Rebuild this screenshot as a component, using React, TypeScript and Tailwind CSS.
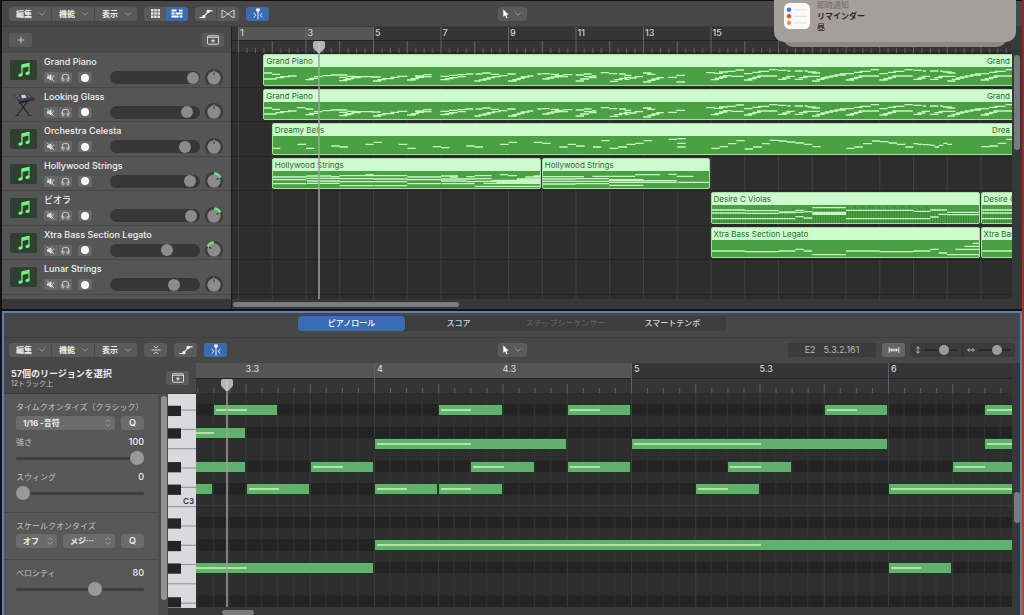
/**
 * Arrange window with the tracks area on top and the piano roll editor below.
 */

import { useState } from "react";
import type { ReactNode } from "react";
import { ChevronDown, ChevronsUpDown, Headphones, Plus } from "lucide-react";

// [start, y, end] in thirds of a pixel, measured from the region's corner
type Seg = [number, number, number];

// ---- timeline scales ----
const BAR = 135 / 4; // tracks area, px per bar
const BAR_ONE = 6; // x of bar 1 in the tracks area
const barX = (bar: number) => BAR_ONE + (bar - 1) * BAR;

const STEP = 257 / 16; // piano roll, px per 1/16
const BAR_FOUR = 178; // x of bar 4 in the piano roll
const stepX = (step: number) => BAR_FOUR + step * STEP;

const ROWS = 19;
const ROW_H = 214 / ROWS;

const shift = (segs: Seg[], dx: number): Seg[] => segs.map(([a, y, b]) => [a + dx, y, b + dx]);

// ---- region contents ----
const PIANO_INTRO: Seg[] = [
  [0, 18, 24], [24, 22, 48], [0, 36, 38], [35, 32, 60], [48, 29, 75], [72, 27, 98],
  [124, 38, 150], [135, 34, 162], [150, 29, 175], [175, 26, 200], [200, 24, 250],
  [225, 31, 250], [225, 41, 250], [238, 38, 262], [245, 35, 270], [250, 28, 275], [262, 32, 290], [275, 29, 328], [322, 30, 350],
  [327, 42, 352], [340, 38, 365], [355, 35, 390], [380, 31, 405], [400, 28, 430],
  [429, 39, 455], [440, 35, 465], [455, 31, 480], [453, 27, 480], [475, 29, 503], [478, 23, 503],
  [529, 38, 555], [529, 28, 555], [542, 35, 568], [555, 25, 580], [555, 32, 580], [580, 23, 605], [580, 29, 605], [605, 21, 628],
  [631, 42, 650], [645, 39, 668], [656, 36, 680], [635, 21, 655], [655, 18, 680], [668, 32, 693], [685, 29, 710], [680, 22, 705], [705, 26, 730], [730, 21, 755],
  [732, 42, 758], [745, 38, 770], [758, 34, 782], [770, 30, 796], [790, 27, 808],
  [820, 21, 833], [835, 20, 857], [835, 36, 857], [847, 33, 870], [860, 22, 885], [860, 30, 885], [872, 26, 898], [885, 29, 912], [898, 23, 925],
  [935, 42, 960], [948, 36, 975], [960, 29, 985], [935, 24, 960], [960, 21, 983], [975, 32, 998], [983, 27, 997],
  [1010, 17, 1035], [1035, 20, 1060], [1065, 21, 1085], [1037, 43, 1062], [1050, 38, 1075], [1065, 34, 1090], [1080, 31, 1102],
  [1082, 25, 1102], [1082, 37, 1097], [1097, 33, 1117], [1112, 29, 1137], [1137, 18, 1162], [1150, 22, 1174],
  [1137, 45, 1162], [1150, 40, 1174], [1162, 36, 1187], [1177, 32, 1200], [1212, 31, 1239], [1237, 25, 1263], [1237, 45, 1263],
];
const RISE: Seg[] = [
  [1440, 39, 1465], [1452, 35, 1477], [1465, 31, 1490], [1479, 27, 1504], [1504, 27, 1540],
  [1440, 20, 1465], [1465, 16, 1490], [1482, 13, 1515], [1515, 8, 1540],
];
const CREST: Seg[] = [
  [1542, 10, 1567], [1570, 12, 1580], [1592, 12, 1617], [1622, 12, 1631], [1631, 15, 1657], [1644, 18, 1668],
  [1542, 37, 1567], [1555, 33, 1579], [1567, 28, 1592], [1592, 37, 1617], [1605, 32, 1630], [1617, 28, 1643], [1640, 28, 1668],
  [1644, 42, 1668], [1657, 37, 1682], [1670, 33, 1694], [1682, 30, 1707], [1697, 27, 1722], [1712, 24, 1745], [1727, 21, 1745],
];
const PIANO: Seg[] = [
  ...PIANO_INTRO,
  [1326, 17, 1352], [1350, 19, 1377], [1365, 15, 1392], [1390, 13, 1415], [1415, 9, 1440],
  [1340, 38, 1365], [1352, 34, 1377], [1365, 30, 1390], [1377, 26, 1402], [1402, 28, 1439],
  ...RISE,
  ...CREST,
  ...shift(RISE, 305),
  ...shift(RISE, 406),
  ...shift(CREST, 406),
  ...shift(RISE, 710),
];
const GLASS: Seg[] = [[98, 17, 124], [124, 21, 148], ...PIANO.filter(([a, y]) => a !== 1237 || y !== 45)];

const BELLS: Seg[] = [
  [0, 37, 22], [73, 25, 99], [99, 37, 124], [175, 30, 200], [200, 33, 225], [277, 25, 302], [302, 19, 327], [377, 25, 403],
  [403, 37, 428], [479, 32, 504], [504, 35, 529], [580, 30, 605], [605, 33, 630], [681, 25, 707], [707, 19, 732], [782, 19, 807],
  [807, 22, 833], [859, 33, 884], [884, 25, 909], [909, 30, 935], [960, 33, 985], [985, 14, 1010], [1010, 37, 1035], [1035, 33, 1062],
  [1060, 25, 1087], [1087, 22, 1112], [1112, 14, 1137], [1187, 10, 1212], [1213, 8, 1238], [1213, 22, 1238], [1213, 33, 1238],
  [1315, 37, 1340], [1340, 32, 1365], [1365, 23, 1390], [1390, 14, 1415], [1415, 39, 1440], [1440, 33, 1467], [1467, 23, 1490],
  [1490, 13, 1517], [1517, 15, 1542], [1542, 18, 1567], [1567, 21, 1593], [1593, 25, 1618], [1618, 32, 1643], [1720, 37, 1744],
  [1744, 33, 1770], [1770, 23, 1797], [1797, 15, 1821], [1821, 17, 1847], [1847, 21, 1872], [1872, 25, 1897], [1897, 33, 1921],
  [1921, 23, 1935], [1935, 25, 1947], [1949, 26, 1972], [1972, 28, 1985], [1985, 33, 1998], [1998, 28, 2011], [2011, 22, 2023],
  [2023, 25, 2037], [2125, 32, 2150], [2150, 30, 2175], [2175, 22, 2200], [2200, 10, 2224],
];

const STRINGS_A: Seg[] = [
  [0, 18, 100], [0, 26, 100], [0, 38, 100], [100, 15, 175], [100, 22, 200], [102, 30, 200], [102, 37, 200],
  [175, 17, 200], [200, 14, 302], [277, 11, 302], [200, 23, 302], [200, 32, 302], [200, 44, 302], [302, 14, 403], [302, 24, 403],
  [302, 32, 403], [304, 44, 403], [403, 18, 504], [403, 26, 504], [403, 38, 504], [504, 15, 555], [530, 18, 555], [504, 24, 605],
  [504, 30, 580], [507, 38, 605], [580, 17, 605], [580, 32, 605], [605, 14, 656], [605, 23, 656], [605, 31, 806], [605, 46, 806],
  [631, 37, 806], [671, 34, 806], [681, 11, 706], [706, 14, 732], [656, 28, 806], [757, 18, 806], [782, 15, 806], [732, 24, 806],
];
const STRINGS_B: Seg[] = [
  [0, 17, 98], [0, 24, 98], [0, 31, 198], [0, 39, 98], [98, 17, 123], [148, 16, 276], [98, 23, 198], [98, 38, 198],
  [198, 26, 301], [198, 34, 401], [198, 43, 301], [276, 11, 351], [376, 10, 401], [401, 16, 451], [198, 29, 401], [404, 34, 501],
];
const VIOLAS: Seg[] = [
  [0, 15, 98], [0, 24, 98], [0, 41, 250], [98, 17, 200], [98, 25, 200], [200, 21, 250], [200, 23, 250], [250, 16, 275],
  [250, 22, 275], [250, 35, 275], [275, 20, 301], [275, 39, 301], [301, 8, 402], [301, 22, 402], [301, 25, 402], [301, 28, 402],
  [402, 16, 604], [402, 41, 655], [604, 19, 655], [655, 15, 705], [655, 36, 680], [680, 28, 705], [705, 22, 807], [705, 29, 807],
];
const BASS: Seg[] = [
  [0, 33, 98], [98, 35, 200], [200, 33, 250], [250, 28, 275], [275, 33, 300], [301, 44, 402], [402, 33, 503], [503, 35, 605],
  [605, 33, 655], [655, 28, 680], [680, 39, 705], [705, 44, 807], [730, 28, 807], [757, 19, 807], [782, 10, 807],
];

interface RegionData {
  name: string;
  from: number;
  to: number;
  segs: Seg[];
  tail?: string; // name of the next region's edge, right aligned
  hatched?: boolean;
}
interface Track {
  name: string;
  volume: number;
  pan: number;
  keys?: boolean;
  regions: RegionData[];
}

const TRACKS: Track[] = [
  { name: "Grand Piano", volume: 99, pan: 0, regions: [{ name: "Grand Piano", from: 1.75, to: 40, segs: PIANO, tail: "Grand" }] },
  { name: "Looking Glass", volume: 91, pan: 0, keys: true, regions: [{ name: "Grand Piano", from: 1.75, to: 40, segs: GLASS, tail: "Grand" }] },
  { name: "Orchestra Celesta", volume: 88, pan: 0, regions: [{ name: "Dreamy Bells", from: 2, to: 40, segs: BELLS, tail: "Drea" }] },
  {
    name: "Hollywood Strings", volume: 95, pan: 60,
    regions: [
      { name: "Hollywood Strings", from: 2, to: 10, segs: STRINGS_A },
      { name: "Hollywood Strings", from: 10, to: 15, segs: STRINGS_B },
    ],
  },
  {
    name: "ビオラ", volume: 96, pan: 60,
    regions: [
      { name: "Desire C Violas", from: 15, to: 23, segs: VIOLAS, hatched: true },
      { name: "Desire C Violas", from: 23, to: 31, segs: VIOLAS, hatched: true },
    ],
  },
  {
    name: "Xtra Bass Section Legato", volume: 66, pan: -60,
    regions: [
      { name: "Xtra Bass Section Legato", from: 15, to: 23, segs: BASS },
      { name: "Xtra Bass Section Legato", from: 23, to: 31, segs: BASS },
    ],
  },
  { name: "Lunar Strings", volume: 74, pan: 0, regions: [] },
];

// Piano roll notes: [row, first 1/16, last 1/16], counted from bar 4
const NOTES: [number, number, number][] = [
  [1, -10, -6], [1, 4, 8], [1, 12, 16], [1, 28, 32], [1, 38, 42],
  [3, -12, -8],
  [4, 0, 12], [4, 16, 32], [4, 38, 50],
  [6, -16, -8], [6, -4, 0], [6, 6, 10], [6, 12, 16], [6, 22, 26], [6, 36, 40],
  [8, -14, -10], [8, -8, -4], [8, 0, 4], [8, 4, 8], [8, 20, 24], [8, 32, 48],
  [13, 0, 48],
  [15, -16, 0], [15, 32, 36],
];
const BLACK_ROWS = [1, 3, 6, 8, 11, 13, 15, 18];

// ---- icons ----
function GridIcon() {
  return (
    <svg viewBox="0 0 9 9" className="size-[9px]" fill="#e4e4e4">
      {[0, 3.25, 6.5].map((y) => [0, 3.25, 6.5].map((x) => <rect key={`${x}-${y}`} x={x} y={y} width="2.5" height="2.5" />))}
    </svg>
  );
}

function RegionsIcon() {
  return (
    <svg viewBox="0 0 12 9" className="h-[9px] w-3" fill="#fff">
      <path d="M.5.500h5v2h-5zM8 .5h3.500v2H8zM.5 3.500h3v2h-3zM4.500 3.500h7v2h-7zM.5 6.500h7v2h-7zM8.500 6.500h3v2h-3z" />
    </svg>
  );
}

function AutomationIcon() {
  return (
    <svg viewBox="0 0 14 10" className="h-2.5 w-3.5" fill="none" stroke="#f2f2f2" strokeWidth="1.200">
      <path d="M.5 8.500h3.500L10 1.800h3.500" />
      <circle cx="4.800" cy="7.800" r="1.700" fill="#f2f2f2" stroke="none" />
      <circle cx="9.200" cy="2.400" r="1.700" fill="#f2f2f2" stroke="none" />
    </svg>
  );
}

function FlexIcon() {
  return (
    <svg viewBox="0 0 14 10" className="h-2.5 w-3.5" fill="none" stroke="#dcdcdc" strokeWidth="1">
      <path d="M1 1.200C3.500 2 5 4 7 5S10.500 8 13 8.800V1.200C10.500 2 9 4 7 5S3.500 8 1 8.800z" />
    </svg>
  );
}

function SnapIcon() {
  return (
    <svg viewBox="0 0 12 12" className="size-3" fill="none" stroke="#dfe9f7" strokeWidth="1">
      <path d="M6 4v7.500M1.800 4.800 3.700 7.200 1.800 9.600M10.200 4.800 8.300 7.200l1.900 2.400" />
      <path d="M4.200.500h3.600v2.300L6 4.600 4.200 2.800z" fill="#fff" stroke="none" />
    </svg>
  );
}

function CatchIcon() {
  return (
    <svg viewBox="0 0 12 10" className="h-2.5 w-3" fill="none" stroke="#d8d8d8" strokeWidth="1">
      <rect x=".5" y=".8" width="11" height="8.400" rx=".6" />
      <path d="M.5 2.300h11" />
      <path d="M6 3.600v3M4.400 5.400 6 7.300l1.600-1.900z" fill="#d8d8d8" strokeWidth=".8" />
    </svg>
  );
}

function CollapseIcon() {
  return (
    <svg viewBox="0 0 10 10" className="size-2.5" fill="none" stroke="#cfcfcf" strokeWidth="1">
      <path d="M.5 5h9M2.800 1 5 3.200 7.200 1M2.800 9 5 6.800 7.200 9" />
    </svg>
  );
}

function PointerIcon() {
  return (
    <svg viewBox="0 0 8 11" className="h-[10px] w-2" fill="#fff">
      <path d="M1 .3v8.200l1.900-1.700 1.500 3.500 1.400-.6-1.500-3.400h2.500z" />
    </svg>
  );
}

function MuteIcon() {
  return (
    <svg viewBox="0 0 9 9" className="size-[9px]">
      <path d="M1 3.200h1.700L5.500 1v7L2.700 5.800H1z" fill="#dedede" />
      <path d="M1.200.800 8 8.200" stroke="#dedede" strokeWidth=".9" />
      <path d="M6.600 3.500v2M7.800 2.500v1.500" stroke="#dedede" strokeWidth=".7" />
    </svg>
  );
}

function NotesIcon() {
  return (
    <svg viewBox="0 0 14 16" className="h-4 w-3.5" fill="#77f07c">
      <path d="M4.300 2.600 12.600.6v10.600h-1.200V4.600L5.600 6v6.900H4.300z" />
      <ellipse cx="3.500" cy="13" rx="2.200" ry="1.700" transform="rotate(-18 3.500 13)" />
      <ellipse cx="10.500" cy="11.300" rx="2.200" ry="1.700" transform="rotate(-18 10.500 11.300)" />
    </svg>
  );
}

function StageKeyboardIcon() {
  return (
    <svg viewBox="0 0 27 26" className="h-[26px] w-[27px]">
      <path d="M7.500 23 17 10M18.500 22 9.500 10M5.500 24l3.500-1M17 23l4.500.5" stroke="#242426" strokeWidth="1.200" />
      <path d="m3 3.500 14-2.500 7.500 5L9 10z" fill="#413f50" />
      <path d="m9 10 15.500-4v2L9 12z" fill="#241c26" />
      <path d="m19 7.600 5.500-1.600v2L19 9.500z" fill="#6b1f25" />
      <path d="m11 3.200 4-.6 1.500 3-4.500.9z" fill="#c8d4e6" />
      <path d="m5 4.300 4-.5M7.500 6.500l3-.5M17 3l3 1.800" stroke="#8587a8" strokeWidth=".8" />
    </svg>
  );
}

// ---- shared controls ----
function ToolButton({ label, active, children }: { label: string; active?: boolean; children: ReactNode }) {
  return (
    <button
      aria-label={label}
      className={`flex h-[14px] w-[23px] items-center justify-center rounded-[3px] ${active ? "bg-[#3a6cb4]" : "bg-[#5a5a5a]"}`}
    >
      {children}
    </button>
  );
}

function MenuGroup() {
  return (
    <div className="flex h-[14px] w-32 divide-x divide-[#4a4a4a] overflow-hidden rounded-[3px] bg-[#5a5a5a]">
      {["編集", "機能", "表示"].map((m) => (
        <button key={m} className="flex flex-1 items-center justify-between pr-1 pl-[7px] text-[8px] font-bold text-[#ededed]">
          {m}
          <ChevronDown className="size-2.5 text-[#a8a8a8]" />
        </button>
      ))}
    </div>
  );
}

function PointerMenu() {
  return (
    <button aria-label="ツール" className="flex h-[14px] w-[29px] items-center justify-center gap-[3px] rounded-[3px] bg-[#5a5a5a]">
      <PointerIcon />
      <ChevronDown className="size-2.5 text-[#a8a8a8]" />
    </button>
  );
}

function PanKnob({ pan }: { pan: number }) {
  const arc = pan > 0 ? "M9 1.500A7.500 7.500 0 0 1 15.500 5.500" : pan < 0 ? "M9 1.500A7.500 7.500 0 0 0 2.500 5.500" : "M9 .8v2";
  return (
    <svg viewBox="0 0 18 18" className="size-[18px] shrink-0" role="img" aria-label={`パン ${pan}`}>
      <path d="M4 15.200A8 8 0 1 1 14 15.200" fill="none" stroke="#3a3a3a" strokeWidth="2" />
      <circle cx="9" cy="9" r="6.500" fill="#8b8b8b" />
      <path d={arc} fill="none" stroke={pan === 0 ? "#5a9c5c" : "#75e37d"} strokeWidth={pan === 0 ? 1 : 2.500} />
      <path d="M9 3.500v2.500" stroke="#333" strokeWidth="1" transform={`rotate(${pan} 9 9)`} />
    </svg>
  );
}

function TrackHeader({ track }: { track: Track }) {
  const [volume, setVolume] = useState(track.volume);
  return (
    <div className="flex border-b border-[#484848] pl-2">
      <div className={`mt-[7px] flex h-5 w-[27px] shrink-0 items-center justify-center rounded-[2px] ${track.keys ? "" : "bg-[#2d4032]"}`}>
        {track.keys ? <StageKeyboardIcon /> : <NotesIcon />}
      </div>
      <div className="ml-[7px] min-w-0 flex-1 pt-[3px]">
        <div className="truncate text-[9px] leading-3 font-medium text-[#f0f0f0]">{track.name}</div>
        <div className="mt-[3px] flex h-[13px] items-center">
          <div className="flex h-[11px] w-7 divide-x divide-[#555] overflow-hidden rounded-[2px] bg-[#686868]">
            <button aria-label="ミュート" className="flex flex-1 items-center justify-center"><MuteIcon /></button>
            <button aria-label="ソロ" className="flex flex-1 items-center justify-center">
              <Headphones className="size-[9px] text-[#e8e8e8]" />
            </button>
          </div>
          <button aria-label="録音可能" className="ml-1.5 flex h-[11px] w-[14px] items-center justify-center rounded-[2px] bg-[#686868]">
            <span className="size-2 rounded-full bg-white" />
          </button>
          <input
            type="range"
            aria-label={`${track.name} 音量`}
            value={volume}
            onChange={(e) => setVolume(Number(e.target.value))}
            className="ml-[18px] h-[13px] w-[90px] appearance-none rounded-full bg-[#373737] [&::-webkit-slider-thumb]:size-3 [&::-webkit-slider-thumb]:appearance-none [&::-webkit-slider-thumb]:rounded-full [&::-webkit-slider-thumb]:bg-[#8b8b8b]"
          />
          <div className="ml-[5px] flex"><PanKnob pan={track.pan} /></div>
        </div>
      </div>
    </div>
  );
}

function Region({ region }: { region: RegionData }) {
  const width = (region.to - region.from) * BAR;
  return (
    <div
      className="absolute inset-y-px overflow-hidden rounded-[2px] border border-[#a3e0a1] bg-[#4ca044]"
      style={{ left: barX(region.from), width: width - 1 }}
    >
      <div className="h-3 truncate bg-[#ccfccd] pl-0.5 text-[8px] leading-3 text-[#2e6a31]">{region.name}</div>
      <svg className="block h-5" width={width} viewBox={`0 0 ${width * 3} 60`} preserveAspectRatio="none">
        {region.hatched && (
          <path
            d={Array.from({ length: 110 }, (_, i) => `M${i * 7.4} ${i > 32 && i < 90 ? 2 + ((i * 5) % 16) : 18}V57`).join("")}
            stroke="#3a8536"
            strokeWidth="3"
          />
        )}
        <path d={region.segs.map(([a, y, b]) => `M${a} ${y}H${b}`).join("")} stroke="#c6f7c4" strokeWidth="4" />
      </svg>
    </div>
  );
}

function Playhead({ x }: { x: number }) {
  return (
    <svg className="pointer-events-none absolute top-0 z-10 h-full w-3" style={{ left: x - 6 }} aria-hidden="true">
      <path d="M6 6V600" stroke="#a0a0a0" strokeWidth="1.500" />
      <path d="M2 0h8q2 0 2 2v4q0 1-1 2l-4 4H5L1 8Q0 7 0 6V2Q0 0 2 0z" fill="#b4b4b4" />
      <path d="M6 1.500V12" stroke="#cfcfcf" strokeWidth="1" />
    </svg>
  );
}

function TracksArea() {
  return (
    <div className="relative min-w-0 flex-1 overflow-hidden bg-[#2d2d2d]">
      {/* ruler */}
      <div className="relative h-[26px] bg-[#353535]">
        <div className="absolute top-0 h-[13px] bg-[#565656]" style={{ left: barX(1), width: 4 * BAR }} />
        <svg className="absolute inset-0 size-full">
          <defs>
            <pattern id="bars" x={BAR_ONE} width={BAR * 2} height="26" patternUnits="userSpaceOnUse">
              <path
                d={[1, 2, 3, 5, 6, 7].map((n) => `M${(n * BAR) / 4 + 0.5} 21v5`).join("") + `M${BAR + 0.5} 14v12M.5 0v26`}
                stroke="#646464"
              />
            </pattern>
          </defs>
          <path d="M0 13.500H4000M0 25.500H4000" stroke="#222" />
          <rect x={BAR_ONE} width="100%" height="26" fill="url(#bars)" />
        </svg>
        {[1, 3, 5, 7, 9, 11, 13, 15, 17, 19, 21, 23].map((n) => (
          <span key={n} className="absolute top-0 text-[9px] leading-3 font-medium text-[#d0d0d0]" style={{ left: barX(n) + 2 }}>
            {n}
          </span>
        ))}
      </div>

      {/* lanes */}
      <div className="relative h-[246px]">
        <svg className="absolute inset-0 size-full">
          <defs>
            <pattern id="lane-bars" x={BAR_ONE} width={BAR} height="250" patternUnits="userSpaceOnUse">
              <path d="M.5 0v250" stroke="#404040" />
            </pattern>
          </defs>
          <rect x={BAR_ONE} width="100%" height="100%" fill="url(#lane-bars)" />
        </svg>
        <div className="grid h-[242px] auto-rows-fr">
          {TRACKS.map((t) => (
            <div key={t.name} className="relative border-b border-[#252525]">
              {t.regions.map((r) => (
                <Region key={r.from} region={r} />
              ))}
              {t.regions[0]?.tail && (
                <span className="absolute top-0.5 right-0 pr-0.5 text-[8px] leading-3 text-[#2e6a31]">{t.regions[0].tail}</span>
              )}
            </div>
          ))}
        </div>
      </div>
      <div className="absolute inset-x-0 top-[14px] h-[258px]">
        <Playhead x={87} />
      </div>

      <div className="h-2.5 bg-[#383838] pt-[3px] pl-px">
        <div className="h-[5px] w-[226px] rounded-full bg-[#7b7b7b]" />
      </div>
    </div>
  );
}

function Notification() {
  return (
    <div className="absolute top-0 right-2 z-20 w-[242px]">
      <div className="absolute inset-x-2 top-0 h-[47px] rounded-b-[12px] bg-[#8d8785]" />
      <div className="relative flex h-[42px] rounded-b-[10px] bg-[#a59e9b] pt-[3px] pl-2.5">
        <svg viewBox="0 0 26 26" className="size-[26px]">
          <rect width="26" height="26" rx="5.500" fill="#fafafa" />
          <circle cx="5" cy="6.800" r="2.200" fill="#2f7bf6" />
          <circle cx="5" cy="13.300" r="2.200" fill="#e8473a" />
          <circle cx="5" cy="19.800" r="2.200" fill="#ee9a3a" />
          <path d="M10 6.800h13M10 13.300h13M10 19.800h13" stroke="#d5d5d5" strokeWidth=".8" />
        </svg>
        <div className="-mt-[3px] ml-[7px] text-[8px] leading-[11px] text-[#2b2827]">
          <p className="font-medium text-[#7b7573]">即時通知</p>
          <p className="font-bold">リマインダー</p>
          <p className="font-medium">昼</p>
        </div>
      </div>
    </div>
  );
}

// ---- piano roll ----
function InspectorSlider({ id, label, max, start }: { id: string; label: string; max: number; start: number }) {
  const [value, setValue] = useState(start);
  return (
    <div>
      <div className="flex justify-between text-[8px] leading-3 text-[#c4c4c4]">
        <label htmlFor={id}>{label}</label>
        <output htmlFor={id} className="text-[9px] font-medium text-[#f0f0f0]">{value}</output>
      </div>
      <input
        id={id}
        type="range"
        max={max}
        value={value}
        onChange={(e) => setValue(Number(e.target.value))}
        className="mt-[3px] block h-[14px] w-full appearance-none bg-transparent [&::-webkit-slider-runnable-track]:h-[3px] [&::-webkit-slider-runnable-track]:rounded-full [&::-webkit-slider-runnable-track]:bg-[#404040] [&::-webkit-slider-thumb]:-mt-[6px] [&::-webkit-slider-thumb]:size-[14px] [&::-webkit-slider-thumb]:appearance-none [&::-webkit-slider-thumb]:rounded-full [&::-webkit-slider-thumb]:bg-[#999]"
      />
    </div>
  );
}

function Picker({ label, value, className }: { label: string; value: string; className: string }) {
  return (
    <div className={`relative ${className}`}>
      <select
        aria-label={label}
        className="block h-[14px] w-full appearance-none rounded-[3px] bg-[#6b6b6b] pl-[7px] text-[8px] leading-[14px] font-bold text-[#f0f0f0]"
      >
        <option>{value}</option>
      </select>
      <ChevronsUpDown className="pointer-events-none absolute top-[2px] right-[2px] size-2.5 text-[#a8a8a8]" />
    </div>
  );
}

function QuantizeButton() {
  return <button className="h-[14px] w-[23px] rounded-[3px] bg-[#6b6b6b] text-[9px] leading-[14px] font-semibold text-[#f0f0f0]">Q</button>;
}

function Inspector() {
  return (
    <div className="flex min-h-0 flex-1">
      <div className="min-w-0 flex-1 bg-[#575757]">
        <section className="border-b border-[#4a4a4a] pt-[7px] pr-[14px] pb-3 pl-3">
          <h3 className="text-[8px] leading-3 whitespace-nowrap text-[#c4c4c4]">タイムクオンタイズ（クラシック）</h3>
          <div className="mt-[3px] flex gap-1.5">
            <Picker label="タイムクオンタイズ" value="1/16 -音符" className="flex-1" />
            <QuantizeButton />
          </div>
          <div className="mt-1.5 flex flex-col gap-1.5">
            <InspectorSlider id="strength" label="強さ" max={100} start={100} />
            <InspectorSlider id="swing" label="スウィング" max={100} start={0} />
          </div>
        </section>
        <section className="border-b border-[#4a4a4a] pt-[7px] pr-[14px] pb-[11px] pl-3">
          <h3 className="text-[8px] leading-3 text-[#c4c4c4]">スケールクオンタイズ</h3>
          <div className="mt-0.5 flex gap-1.5">
            <Picker label="スケールのルート" value="オフ" className="w-[41px]" />
            <Picker label="スケールの種類" value="メジ…" className="flex-1 font-['Noto_Sans_CJK_JP',sans-serif]" />
            <QuantizeButton />
          </div>
        </section>
        <section className="pt-[7px] pr-[14px] pl-3">
          <InspectorSlider id="velocity" label="ベロシティ" max={127} start={80} />
        </section>
      </div>
      <div className="w-2.5 bg-[#4c4c4c] pt-0.5 pl-[3px]">
        <div className="h-[204px] w-[6px] rounded-full bg-[#929292]" />
      </div>
    </div>
  );
}

function Keyboard() {
  // C3 sits on row 9; seven white keys share the twelve rows of an octave
  const whiteH = (ROW_H * 12) / 7;
  const base = ROW_H * 10;
  return (
    <div className="relative h-[214px] w-7 shrink-0 bg-[#dadade]">
      <svg className="absolute inset-0 size-full">
        {[-5, -4, -3, -2, -1, 0, 1, 2, 3, 4, 5].map((n) => (
          <path key={n} d={`M0 ${base + n * whiteH}H28`} stroke="#8c8c90" />
        ))}
        {BLACK_ROWS.map((r) => (
          <rect key={r} y={r * ROW_H + 0.5} width="13" height={ROW_H - 1} fill="#242424" />
        ))}
      </svg>
      <span className="absolute right-0.5 text-[8px] leading-[11px] font-semibold text-[#333]" style={{ top: Math.ceil(9 * ROW_H) }}>
        C3
      </span>
    </div>
  );
}

function RollRuler() {
  const labels: [string, number][] = [["3.3", -8], ["4", 0], ["4.3", 8], ["5", 16], ["5.3", 24], ["6", 32]];
  return (
    <div className="relative h-[31px] overflow-hidden bg-[#353535]">
      <div className="absolute top-0 left-0 h-[15px] bg-[#555]" style={{ width: stepX(16) }} />
      <svg className="absolute inset-0 size-full">
        <defs>
          <pattern id="beats" x={stepX(-16)} width={STEP * 16} height="31" patternUnits="userSpaceOnUse">
            <path
              d={Array.from({ length: 16 }, (_, i) => `M${i * STEP + 0.5} ${i === 0 ? 0 : i % 4 === 0 ? 21 : 25}V31`).join("")}
              stroke="#606060"
            />
          </pattern>
        </defs>
        <path d="M0 15.500H4000" stroke="#252525" />
        <rect width="100%" height="31" fill="url(#beats)" />
        <path d={`M${stepX(-8)} 30.500H${stepX(-4)}M${stepX(32)} 30.500H${stepX(36)}`} stroke="#0c0c0c" />
      </svg>
      {labels.map(([text, step]) => (
        <span
          key={text}
          className="absolute top-0 text-[9px] leading-3 font-medium text-[#d4d4d4]"
          style={{ left: stepX(step) + (text.includes(".") ? 0 : 3) }}
        >
          {text}
        </span>
      ))}
    </div>
  );
}

function RollGrid() {
  return (
    <div className="relative h-[214px] min-w-0 flex-1 overflow-hidden bg-[#2e2e2e]">
      <svg className="absolute inset-0 size-full">
        <defs>
          <pattern id="steps" x={stepX(0)} width={STEP * 4} height="214" patternUnits="userSpaceOnUse">
            <path d={`M${STEP} 0v214M${STEP * 2} 0v214M${STEP * 3} 0v214`} stroke="#343434" />
            <path d="M.5 0v214" stroke="#3c3c3c" />
          </pattern>
        </defs>
        {BLACK_ROWS.map((r) => (
          <rect key={r} y={r * ROW_H} width="100%" height={ROW_H} fill="#232323" />
        ))}
        <rect width="100%" height="100%" fill="url(#steps)" />
        <path d={`M0 ${10 * ROW_H}H4000`} stroke="#3d3d3d" />
      </svg>
      {NOTES.map(([row, from, to]) => (
        <div
          key={`${row}:${from}`}
          className="absolute flex h-3 items-center border border-[#1f3a22] bg-[#61b06d] pl-0.5"
          style={{ top: Math.round(row * ROW_H), left: stepX(from), width: (to - from) * STEP }}
        >
          <div className="h-0.5 w-1/2 bg-[#b3e3a0]" />
        </div>
      ))}
    </div>
  );
}

function ZoomSlider({ label, icon }: { label: string; icon: string }) {
  const [value, setValue] = useState(63);
  return (
    <label className="flex flex-1 items-center justify-between pr-[5px] pl-1">
      <svg viewBox="0 0 8 8" className={`size-2 shrink-0 ${icon}`} fill="none" stroke="#b8b8b8" strokeWidth="1">
        <path d="M4 .8v6.400M2.200 2.500 4 .7l1.800 1.800M2.200 5.500 4 7.300l1.800-1.800" />
      </svg>
      <input
        type="range"
        aria-label={label}
        value={value}
        onChange={(e) => setValue(Number(e.target.value))}
        className="h-2.5 w-8 appearance-none bg-transparent [&::-webkit-slider-runnable-track]:h-0.5 [&::-webkit-slider-runnable-track]:bg-[#2a2a2a] [&::-webkit-slider-thumb]:-mt-1 [&::-webkit-slider-thumb]:size-2.5 [&::-webkit-slider-thumb]:appearance-none [&::-webkit-slider-thumb]:rounded-full [&::-webkit-slider-thumb]:bg-[#9b9b9b]"
      />
    </label>
  );
}

const EDITORS = ["ピアノロール", "スコア", "ステップシーケンサー", "スマートテンポ"];

function PianoRoll() {
  const [editor, setEditor] = useState(EDITORS[0]);
  return (
    <section className="flex min-h-0 flex-1 flex-col border-2 border-b-0 border-[#5b81b3] bg-[#474747]">
      <div className="flex h-[25px] justify-center border-b border-[#3e3e3e] pt-[3px]">
        <div role="tablist" className="grid h-[15px] w-[428px] grid-cols-4 rounded-[4px] bg-[#3d3d3d]">
          {EDITORS.map((e) => (
            <button
              key={e}
              role="tab"
              aria-selected={e === editor}
              disabled={e === "ステップシーケンサー"}
              onClick={() => setEditor(e)}
              className={[
                "rounded-[4px] text-[8px] leading-[15px] font-medium disabled:text-[#5e5e5e]",
                e === editor ? "bg-[#3a6cb4] text-white" : "text-[#d4d4d4]",
              ].join(" ")}
            >
              {e}
            </button>
          ))}
        </div>
      </div>

      <div className="grid h-[25px] shrink-0 grid-cols-[1fr_auto_1fr] items-center px-[5px] pb-px">
        <div className="flex gap-[7px]">
          <MenuGroup />
          <ToolButton label="折りたたむ"><CollapseIcon /></ToolButton>
          <ToolButton label="オートメーション"><AutomationIcon /></ToolButton>
          <ToolButton label="スナップ" active><SnapIcon /></ToolButton>
        </div>
        <PointerMenu />
        <div className="flex items-center justify-end">
          <div className="flex h-[14px] w-[88px] items-center justify-center gap-2 rounded-[3px] bg-[#3b3b3b] text-[9px] text-[#b9b9b9]">
            <span>E2</span>
            <span>5.3.2.161</span>
          </div>
          <div className="ml-1.5 flex">
            <button aria-label="自動ズーム" className="flex h-[14px] w-[23px] items-center justify-center rounded-[3px] bg-[#656565]">
              <svg viewBox="0 0 12 8" className="h-2 w-3" fill="#f2f2f2">
                <path d="M.7 1.200h1v5.600h-1zM10.300 1.200h1v5.600h-1zM2 4l2.200-2v1.500h3.600V2L10 4 7.800 6V4.500H4.200V6zM5.600 2.500h.8v3h-.8z" />
              </svg>
            </button>
          </div>
          <div className="ml-[5px] flex h-[14px] w-[105px] divide-x divide-[#2e2e2e] rounded-[3px] bg-[#3b3b3b]">
            <ZoomSlider label="垂直ズーム" icon="rotate-0" />
            <ZoomSlider label="水平ズーム" icon="rotate-90" />
          </div>
        </div>
      </div>

      <div className="flex min-h-0 flex-1">
        <div className="flex w-48 shrink-0 flex-col">
          <div className="flex h-[31px] shrink-0 items-center justify-between border-b border-[#3e3e3e] px-[7px]">
            <div>
              <h2 className="text-[9px] leading-[11px] font-bold text-[#ececec]">57個のリージョンを選択</h2>
              <p className="text-[7px] leading-[10px] text-[#c4c4c4]">12トラック上</p>
            </div>
            <ToolButton label="キャッチ"><CatchIcon /></ToolButton>
          </div>
          <div className="flex min-h-0 flex-1">
            <Inspector />
            <div className="flex flex-col bg-[#383838]">
              <Keyboard />
            </div>
          </div>
        </div>
        <div className="relative flex min-w-0 flex-1 flex-col bg-[#383838]">
          <RollRuler />
          <div className="flex">
            <RollGrid />
          </div>
          <div className="absolute top-4 left-0 h-[228px]">
            <Playhead x={31} />
          </div>
          <div className="mt-[3px] ml-[26px] h-[5px] w-8 rounded-full bg-[#7b7b7b]" />
        </div>
        <div className="w-2 shrink-0 bg-[#383838] pt-[129px] pl-0.5">
          <div className="h-[31px] w-[6px] rounded-full bg-[#7b7b7b]" />
        </div>
      </div>
    </section>
  );
}

export default function App() {
  return (
    <div
      lang="ja"
      className="relative h-screen overflow-hidden bg-linear-to-b from-[#8a2a24] via-[#9c3726] to-[#a9502c] pr-0.5 font-['Inter','Noto_Sans_CJK_JP',sans-serif]"
    >
      <div className="flex h-full flex-col bg-[#121214] pt-px pl-0.5">
        <header className="grid h-[26px] shrink-0 grid-cols-[1fr_auto_1fr] items-center border-b border-[#3c3c3c] bg-[#474747] px-[7px]">
          <div className="flex items-center gap-[7px]">
            <MenuGroup />
            <div className="flex h-[14px] overflow-hidden rounded-[3px] bg-[#5a5a5a]">
              <button aria-label="グリッド" className="flex w-[22px] items-center justify-center"><GridIcon /></button>
              <button aria-label="トラック" className="flex w-[22px] items-center justify-center bg-[#3a6cb4]"><RegionsIcon /></button>
            </div>
            <div className="flex h-[14px] divide-x divide-[#4a4a4a] rounded-[3px] bg-[#5a5a5a]">
              <button aria-label="オートメーション" className="flex w-[22px] items-center justify-center"><AutomationIcon /></button>
              <button aria-label="フレックス" className="flex w-[22px] items-center justify-center"><FlexIcon /></button>
            </div>
            <ToolButton label="スナップ" active><SnapIcon /></ToolButton>
          </div>
          <PointerMenu />
        </header>

        <main className="flex shrink-0">
          <div className="w-[229px] shrink-0 bg-[#383838]">
            <div className="flex h-[26px] items-center justify-between bg-[#4a4a4a] px-[7px]">
              <ToolButton label="トラックを追加"><Plus className="size-2.5 text-[#e0e0e0]" /></ToolButton>
              <ToolButton label="キャッチ"><CatchIcon /></ToolButton>
            </div>
            <div className="bg-[#555] pb-1">
              <div className="grid h-[242px] auto-rows-fr">
                {TRACKS.map((t) => (
                  <TrackHeader key={t.name} track={t} />
                ))}
              </div>
            </div>
          </div>
          <div className="w-px bg-[#1e1e1e]" />
          <TracksArea />
          <div className="w-2.5 shrink-0 bg-[#383838] pt-7 pl-0.5">
            <div className="h-[95px] w-[6px] rounded-full bg-[#7b7b7b]" />
          </div>
        </main>

        <div className="h-0.5 shrink-0" />
        <PianoRoll />
      </div>
      <Notification />
    </div>
  );
}
